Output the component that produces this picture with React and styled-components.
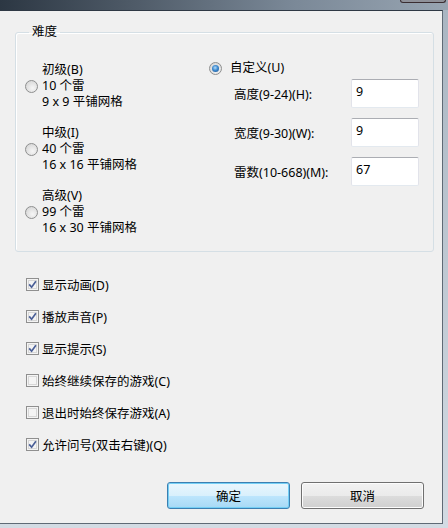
import React from 'react';
import styled, { createGlobalStyle } from 'styled-components';

const Global = createGlobalStyle`
  html, body { margin: 0; padding: 0; background: #c9d3dc; }
  body {
    font-family: "Noto Sans", "Noto Sans CJK SC", "Microsoft YaHei", sans-serif;
    font-size: 12.5px;
    color: #000;
  }
  * { box-sizing: border-box; }
`;

const Window = styled.div`
  width: 448px;
  height: 528px;
  display: flex;
  flex-direction: column;
  background: linear-gradient(to bottom, #a9b5c1, #d3dbe3);
  overflow: hidden;
`;

const TitleStrip = styled.div`
  height: 10px;
  flex: none;
  display: flex;
  justify-content: flex-end;
  align-items: flex-start;
  background: linear-gradient(to right, #2c3743 0%, #4f5b68 30%, #7a8897 65%, #98a5b2 100%);
`;

const CloseEdge = styled.div`
  width: 46px;
  height: 3px;
  margin-right: 2px;
  border: 1px solid #3a2d31;
  border-top: none;
  border-radius: 0 0 3px 3px;
  background: #8f9199;
`;

const Client = styled.div`
  flex: 1;
  margin: 0 5px 4px 0;
  background: #f0f0f0;
  border-top: 1px solid #2f3945;
  border-right: 1px solid #5f6a75;
  border-bottom: 1px solid #5f6a75;
  padding-left: 15px;
  display: flex;
  flex-direction: column;
`;

const Group = styled.fieldset`
  margin: 13px 0 0 0;
  width: 419px;
  border: 1px solid #d5dfe5;
  border-radius: 3px;
  box-shadow: inset 1px 1px 0 #fff;
  padding: 20px 0 15px 9px;
  min-width: 0;
`;

const Legend = styled.legend`
  padding: 0 3px;
  margin-left: 4px;
  line-height: 16px;
`;

const GroupBody = styled.div`
  display: grid;
  grid-template-columns: 184px 1fr;
`;

const PresetColumn = styled.div`
  display: flex;
  flex-direction: column;
  gap: 15px;
  padding-top: 2px;
`;

const Preset = styled.div`
  display: flex;
  align-items: center;
  gap: 4px;
`;

const PresetText = styled.div`
  display: flex;
  flex-direction: column;
  line-height: 16px;
  white-space: pre;
`;

const RadioMark = styled.span`
  width: 13px;
  height: 13px;
  flex: none;
  border-radius: 50%;
  border: 1px solid #8e8f8f;
  background: radial-gradient(circle at 60% 65%, #f6f6f6 0%, #e1e1e1 55%, #cfcfcf 100%);
  display: flex;
  align-items: center;
  justify-content: center;
  &::after {
    content: "";
    width: 7px;
    height: 7px;
    border-radius: 50%;
    display: ${p => (p.$checked ? 'block' : 'none')};
    background: radial-gradient(circle at 45% 40%, #b6dcf7 0%, #3d8ad0 45%, #174b86 100%);
  }
`;

const CustomColumn = styled.div`
  display: flex;
  flex-direction: column;
`;

const CustomRow = styled.div`
  display: flex;
  align-items: center;
  gap: 8px;
  line-height: 16px;
`;

const FieldRow = styled.div`
  display: flex;
  align-items: center;
  height: 29px;
  margin-top: ${p => p.$first ? '3px' : '10px'};
  padding-left: 25px;
`;

const FieldLabel = styled.span`
  width: 117px;
  flex: none;
`;

const NumberBox = styled.input`
  width: 68px;
  height: 29px;
  font: inherit;
  color: #000;
  background: #fff;
  border: 1px solid #e2e3ea;
  border-top-color: #abadb3;
  border-bottom-color: #e3e9ef;
  border-radius: 2px;
  padding: 4px 4px 9px 4px;
  outline: none;
`;

const Options = styled.div`
  display: flex;
  flex-direction: column;
  gap: 12px;
  margin-top: 22px;
  padding-left: 11px;
`;

const CheckRow = styled.label`
  display: flex;
  align-items: center;
  gap: 3px;
  height: 20px;
`;

const CheckBox = styled.span`
  width: 13px;
  height: 13px;
  flex: none;
  border: 1px solid #8f8f8f;
  background: #f4f4f4;
  box-shadow: inset 0 0 0 1px #f4f4f4, inset 0 0 0 2px #d7d7d7;
  display: flex;
  align-items: center;
  justify-content: center;
`;

const ButtonRow = styled.div`
  display: flex;
  justify-content: flex-end;
  gap: 11px;
  margin-top: 28px;
  padding-right: 18px;
`;

const Button = styled.button`
  width: 123px;
  height: 27px;
  font: inherit;
  color: #000;
  border-radius: 3px;
  padding: 0;
  border: 1px solid ${p => (p.$default ? '#3c7fb1' : '#707070')};
  background: ${p =>
    p.$default
      ? 'linear-gradient(to bottom, #eaf6fd 0%, #d9f0fc 50%, #bee6fd 50%, #a7d9f5 100%)'
      : 'linear-gradient(to bottom, #f2f2f2 0%, #ebebeb 50%, #dddddd 50%, #cfcfcf 100%)'};
  box-shadow: ${p => (p.$default ? 'inset 0 0 0 1px #74cff5' : 'inset 0 0 0 1px #fcfcfc')};
`;

const Check = () => (
  <svg width="9" height="9" viewBox="0 0 9 9">
    <path d="M1.2 4.4 L3.6 7.2 L7.9 1.3" fill="none" stroke="#4a5f97" strokeWidth="1.7" />
  </svg>
);

const presets = [
  ['初级(B)', '10 个雷', '9 x 9 平铺网格'],
  ['中级(I)', '40 个雷', '16 x 16 平铺网格'],
  ['高级(V)', '99 个雷', '16 x 30 平铺网格'],
];

const fields = [
  ['高度(9-24)(H):', '9'],
  ['宽度(9-30)(W):', '9'],
  ['雷数(10-668)(M):', '67'],
];

const options = [
  ['显示动画(D)', true],
  ['播放声音(P)', true],
  ['显示提示(S)', true],
  ['始终继续保存的游戏(C)', false],
  ['退出时始终保存游戏(A)', false],
  ['允许问号(双击右键)(Q)', true],
];

export default function App() {
  return (
    <>
      <Global />
      <Window>
        <TitleStrip>
          <CloseEdge />
        </TitleStrip>
        <Client>
          <Group>
            <Legend>难度</Legend>
            <GroupBody>
              <PresetColumn>
                {presets.map(p => (
                  <Preset key={p[0]}>
                    <RadioMark />
                    <PresetText>
                      <span>{p[0]}</span>
                      <span>{p[1]}</span>
                      <span>{p[2]}</span>
                    </PresetText>
                  </Preset>
                ))}
              </PresetColumn>
              <CustomColumn>
                <CustomRow>
                  <RadioMark $checked />
                  <span>自定义(U)</span>
                </CustomRow>
                {fields.map((f, i) => (
                  <FieldRow key={f[0]} $first={i === 0}>
                    <FieldLabel>{f[0]}</FieldLabel>
                    <NumberBox readOnly defaultValue={f[1]} />
                  </FieldRow>
                ))}
              </CustomColumn>
            </GroupBody>
          </Group>
          <Options>
            {options.map(o => (
              <CheckRow key={o[0]}>
                <CheckBox>{o[1] && <Check />}</CheckBox>
                <span>{o[0]}</span>
              </CheckRow>
            ))}
          </Options>
          <ButtonRow>
            <Button $default>确定</Button>
            <Button>取消</Button>
          </ButtonRow>
        </Client>
      </Window>
    </>
  );
}
